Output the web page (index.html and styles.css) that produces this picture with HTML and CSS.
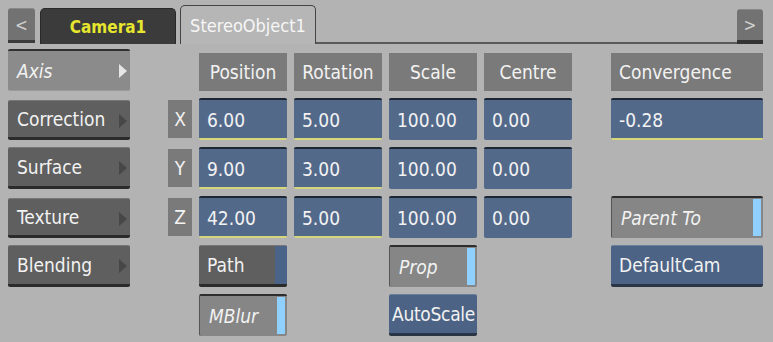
FILE: index.html
```html
<!DOCTYPE html>
<html lang="en">
<head>
  <meta charset="UTF-8" />
  <title>Stereo Object - Axis</title>
  <link rel="stylesheet" href="styles.css">
</head>
<body>
  <div class="tabbar">
    <div class="nav-btn">&lt;</div>
    <div class="tab tab-dark">Camera1</div>
    <div class="tab tab-active">StereoObject1</div>
    <div class="tab-fill"></div>
    <div class="nav-btn nav-right">&gt;</div>
  </div>

  <div class="panel">
    <!-- left menu -->
    <div class="menu-btn active r1">Axis<span class="arrow"></span></div>
    <div class="menu-btn r2">Correction<span class="arrow"></span></div>
    <div class="menu-btn r3">Surface<span class="arrow"></span></div>
    <div class="menu-btn r4">Texture<span class="arrow"></span></div>
    <div class="menu-btn r5">Blending<span class="arrow"></span></div>

    <!-- headers -->
    <div class="head r1 c1">Position</div>
    <div class="head r1 c2">Rotation</div>
    <div class="head r1 c3">Scale</div>
    <div class="head r1 c4">Centre</div>
    <div class="head left r1 conv">Convergence</div>

    <!-- axis rows -->
    <div class="axis r2">X</div>
    <div class="field mark r2 c1">6.00</div>
    <div class="field mark r2 c2">5.00</div>
    <div class="field r2 c3">100.00</div>
    <div class="field r2 c4">0.00</div>
    <div class="field mark r2 conv">-0.28</div>

    <div class="axis r3">Y</div>
    <div class="field mark r3 c1">9.00</div>
    <div class="field mark r3 c2">3.00</div>
    <div class="field r3 c3">100.00</div>
    <div class="field r3 c4">0.00</div>

    <div class="axis r4">Z</div>
    <div class="field mark r4 c1">42.00</div>
    <div class="field mark r4 c2">5.00</div>
    <div class="field r4 c3">100.00</div>
    <div class="field r4 c4">0.00</div>
    <div class="toggle r4 conv">Parent To<span class="led"></span></div>

    <!-- buttons -->
    <div class="btn path r5 c1">Path<span class="path-end"></span></div>
    <div class="toggle r5 c3">Prop<span class="led"></span></div>
    <div class="btn blue r5 conv">DefaultCam</div>

    <div class="toggle r6 c1">MBlur<span class="led"></span></div>
    <div class="btn blue tight r6 c3">AutoScale</div>
  </div>
</body>
</html>
```

FILE: styles.css
```css
/* Page */
body {
  margin: 0;
  width: 773px;
  height: 342px;
  overflow: hidden;
  background: #b3b3b3;
  font-family: 'DejaVu Sans Condensed', 'DejaVu Sans', sans-serif;
  font-size: 19px;
  color: #f2f2f2;
}

/* Tab bar */
.tabbar {
  display: flex;
  align-items: flex-end;
  height: 44px;
  padding: 0 10px 0 8px;
}
.nav-btn {
  width: 27px;
  height: 35px;
  box-sizing: border-box;
  background: #727272;
  border-top: 1px solid #888;
  border-bottom: 3px solid #3a3a3a;
  border-radius: 3px 3px 0 0;
  color: #d0d0d0;
  font-size: 17px;
  display: flex;
  align-items: center;
  justify-content: center;
  margin-bottom: 1px;
}
.nav-right {
  width: 26px;
  margin-bottom: 0;
  border-bottom: 4px solid #333;
}
.tab {
  height: 36px;
  box-sizing: border-box;
  display: flex;
  align-items: center;
  justify-content: center;
  border-radius: 5px 5px 0 0;
  font-size: 18px;
}
.tab-dark {
  width: 136px;
  margin-left: 5px;
  background: #3b3b3b;
  border: 1px solid #2a2a2a;
  border-bottom: none;
  color: #e6e62e;
  font-weight: bold;
  font-size: 17px;
}
.tab-active {
  width: 136px;
  height: 39px;
  margin-left: 4px;
  background: #b6b6b6;
  border: 1px solid #444;
  border-bottom: none;
  color: #f6f6f6;
}
.tab-fill {
  flex: 1;
  height: 0;
  border-bottom: 2px solid #5a5a5a;
}

/* Main grid */
.panel {
  display: grid;
  grid-template-columns: 122px 24px 24px 88px 88px 88px 88px 25px 152px;
  grid-template-rows: repeat(6, 42px);
  column-gap: 7px;
  row-gap: 7px;
  padding: 5px 0 0 8px;
}
.r1 { grid-row: 1; }
.r2 { grid-row: 2; }
.r3 { grid-row: 3; }
.r4 { grid-row: 4; }
.r5 { grid-row: 5; }
.r6 { grid-row: 6; }
.c1 { grid-column: 4; }
.c2 { grid-column: 5; }
.c3 { grid-column: 6; }
.c4 { grid-column: 7; }
.conv { grid-column: 9; }

/* Left menu */
.menu-btn {
  grid-column: 1;
  position: relative;
  box-sizing: border-box;
  display: flex;
  align-items: center;
  padding-left: 9px;
  background: #5f5f5f;
  border-top: 1px solid #777;
  border-bottom: 3px solid #2b2b2b;
  border-radius: 2px;
}
.menu-btn.r2,
.menu-btn.r4 {
  margin-top: 2px;
}
.menu-btn .arrow {
  position: absolute;
  right: 3px;
  top: 13px;
  border-left: 8px solid #474747;
  border-top: 7px solid transparent;
  border-bottom: 7px solid transparent;
}
.menu-btn.active {
  background: #8b8b8b;
  border-top: 2px solid #303030;
  border-bottom: 1px solid #9a9a9a;
  font-style: italic;
}
.menu-btn.active .arrow {
  border-left-color: #e6e6e6;
}

/* Headers and axis labels */
.head {
  align-self: end;
  height: 38px;
  display: flex;
  align-items: center;
  justify-content: center;
  background: #7a7a7a;
}
.head.left {
  justify-content: flex-start;
  padding-left: 8px;
}
.axis {
  grid-column: 3;
  align-self: start;
  height: 38px;
  margin-top: 2px;
  display: flex;
  align-items: center;
  justify-content: center;
  background: #7a7a7a;
}

/* Value fields */
.field {
  box-sizing: border-box;
  display: flex;
  align-items: center;
  padding: 2px 0 0 8px;
  background: #52698a;
  border-top: 2px solid #1d2633;
  border-bottom: 2px solid #52698a;
  border-radius: 2px;
}
.field.mark {
  border-bottom-color: #d6d67a;
}

/* Buttons */
.btn {
  box-sizing: border-box;
  display: flex;
  align-items: center;
  padding-left: 8px;
  border-radius: 2px;
}
.btn.path {
  position: relative;
  background: #5f5f5f;
  border-top: 1px solid #777;
  border-bottom: 3px solid #2b2b2b;
}
.path-end {
  position: absolute;
  right: 0;
  top: 0;
  bottom: 0;
  width: 12px;
  background: #4a6388;
}
.btn.blue {
  background: #4c6385;
  border-top: 1px solid #6a7f9c;
  border-bottom: 3px solid #2a3546;
}
.btn.tight {
  padding-left: 3px;
  letter-spacing: -0.3px;
}
.toggle {
  position: relative;
  box-sizing: border-box;
  display: flex;
  align-items: center;
  padding-left: 9px;
  background: #868686;
  border-top: 2px solid #2e2e2e;
  border-left: 1px solid #555;
  border-radius: 2px;
  font-style: italic;
}
.led {
  position: absolute;
  right: 2px;
  top: 1px;
  bottom: 2px;
  width: 8px;
  background: #8fd0ff;
}
```
